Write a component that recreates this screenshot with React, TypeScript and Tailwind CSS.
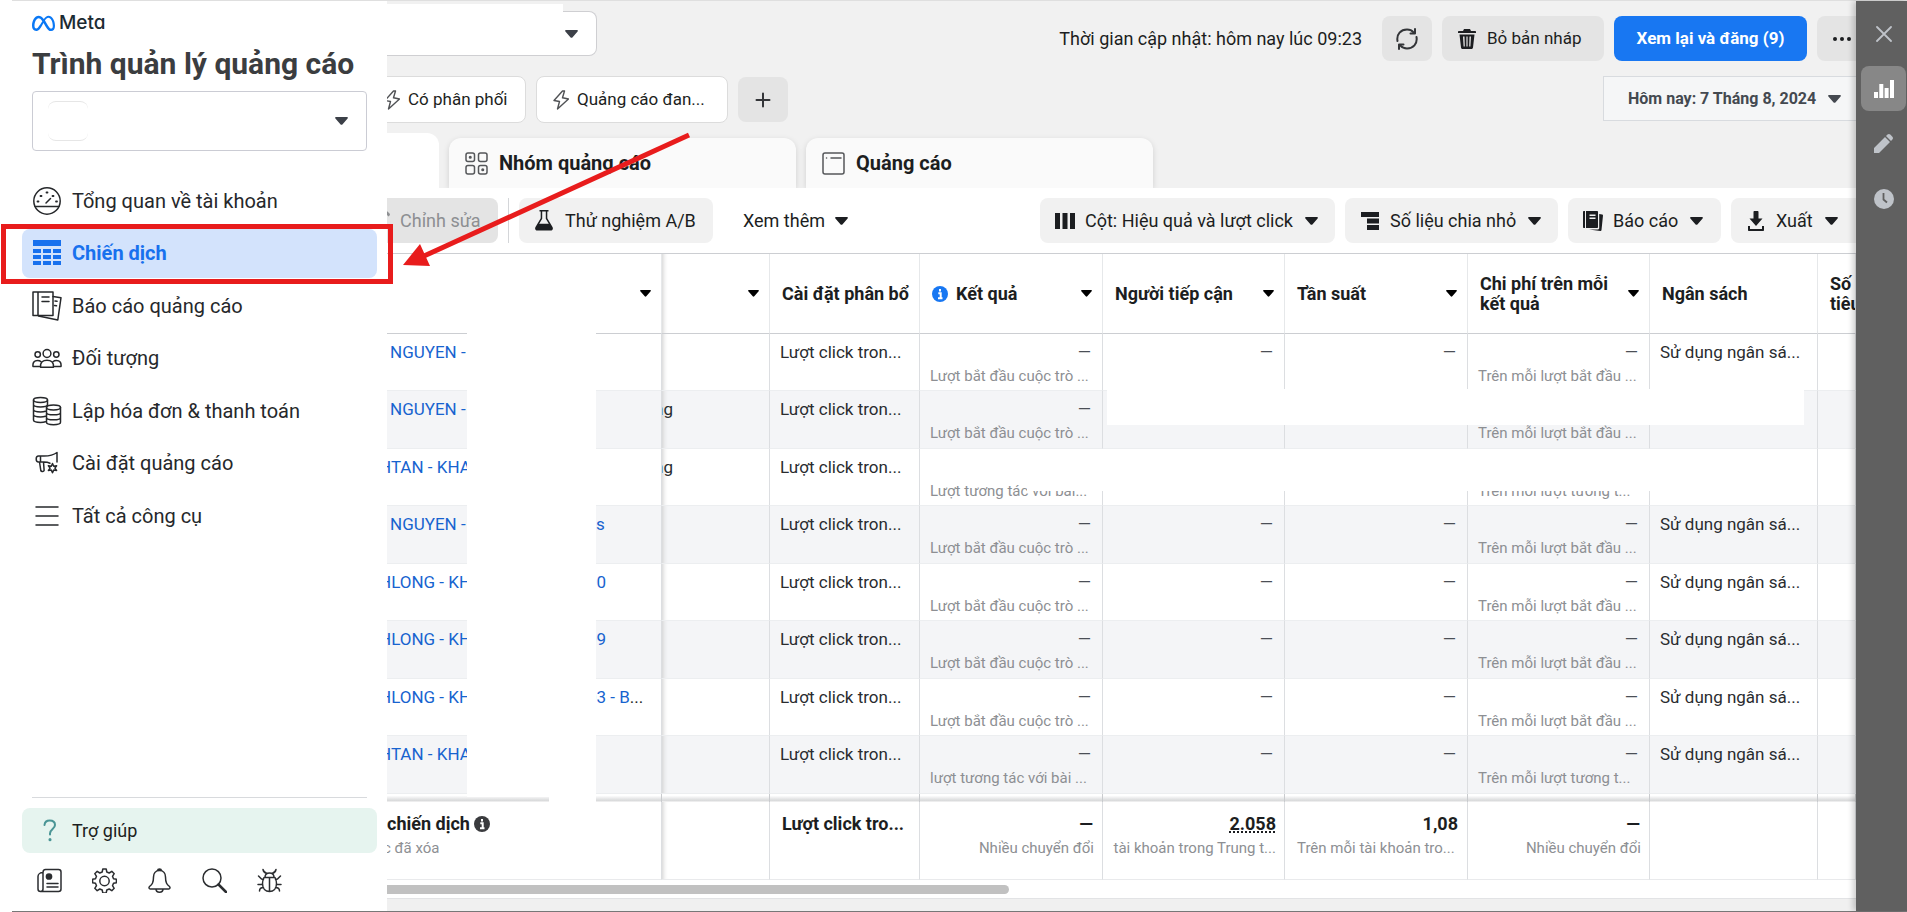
import type { ReactNode } from 'react'
import clsx from 'clsx'
import { FaMeta } from 'react-icons/fa6'

type IconProps = { className?: string }

function Caret({ className = 'w-[13px]' }: IconProps) {
  return (
    <svg viewBox="0 0 13 8" className={clsx('shrink-0', className)} fill="currentColor">
      <path d="M1 0h11c.9 0 1.2.8.6 1.500L7.400 7.400c-.5.6-1.300.6-1.800 0L.4 1.500C-.2.8.1 0 1 0z" />
    </svg>
  )
}

function Line({ children, className = 'size-7', box = 28 }: { children: ReactNode; className?: string; box?: number }) {
  return (
    <svg
      viewBox={`0 0 ${box} ${box}`}
      className={clsx('shrink-0', className)}
      fill="none"
      stroke="currentColor"
      strokeWidth="1.5"
      strokeLinecap="round"
      strokeLinejoin="round"
    >
      {children}
    </svg>
  )
}

const GaugeIcon = () => (
  <Line className="size-[30px]" box={30}>
    <circle cx="15" cy="15" r="13.2" />
    <path d="M3 20.500h24M14 17l4.500-4.500" />
    <path d="M5.500 15.500h1M8.500 10h1M14.500 6.500h1M20.500 10h1M24 15.500h1" strokeWidth="1.800" />
  </Line>
)

const GridIcon = () => (
  <svg viewBox="0 0 30 30" className="size-[30px] shrink-0" fill="currentColor">
    <path d="M1 2h28v6H1zM1 11h8v4H1zM11 11h8v4h-8zM21 11h8v4h-8zM1 17h8v4H1zM11 17h8v4h-8zM21 17h8v4h-8zM1 23h8v4H1zM11 23h8v4h-8zM21 23h8v4h-8z" />
  </svg>
)

const ReportIcon = () => (
  <Line className="size-[30px]" box={30}>
    <path d="M1 1h20v23.500H1zM6 1v23.500M10 6h7M10 10.500h7" />
    <path d="M21 5.500l8 1.200-3.200 22.300L6.500 25M23 10l2 .3M22.500 14.500l2 .3" />
  </Line>
)

const PeopleIcon = () => (
  <Line className="size-[30px]" box={30}>
    <circle cx="15" cy="10.500" r="3.900" />
    <circle cx="5.700" cy="11.500" r="2.700" />
    <circle cx="24.300" cy="11.500" r="2.700" />
    <path d="M8.500 24.200c-.4-5 2.500-7 6.500-7s6.900 2 6.500 7z" />
    <path d="M7.500 23.500H1c-.5-4 1.300-6 4.500-6 1.500 0 2.700.4 3.500 1.200M22.500 23.500H29c.5-4-1.300-6-4.500-6-1.500 0-2.700.4-3.500 1.200" />
  </Line>
)

const CoinsIcon = () => (
  <Line className="size-[30px]" box={30}>
    <ellipse cx="8.500" cy="4" rx="7" ry="2.400" />
    <path d="M1.500 4v20c0 1.400 3 2.400 7 2.400 2 0 3.500-.2 5-.7M15.500 4v6M1.500 8.500c0 1.400 3 2.400 7 2.400s7-1 7-2.400M1.500 13.500c0 1.400 3 2.400 7 2.400 2 0 3.500-.2 5-.7M1.500 18.500c0 1.400 3 2.400 7 2.400 2 0 3.500-.2 5-.7" />
    <ellipse cx="21.500" cy="11.500" rx="7" ry="2.400" />
    <path d="M14.500 11.500v14.800c0 1.400 3 2.400 7 2.400s7-1 7-2.400V11.500M14.500 16.400c0 1.400 3 2.400 7 2.400s7-1 7-2.400M14.500 21.400c0 1.400 3 2.400 7 2.400s7-1 7-2.400" />
  </Line>
)

const MegaphoneIcon = () => (
  <Line className="size-[30px]" box={30}>
    <path d="M25 14V4.500c-4 3-8 3.500-13 3.500H6.500C4.500 8 4.200 9.500 4.200 11s.5 3 2.300 3H12c2.500 0 4.500.5 6 1.200M8.500 8v6M7.500 14l1.300 8.500c.3 1.300 3.500 1.300 3.300-.5L11.500 14" />
    <path d="M20.500 15.500l1.200 2.700 2.900-.5-1.700 2.400 1.700 2.400-2.900-.4-1.200 2.700-1.200-2.700-2.900.4 1.700-2.400-1.700-2.400 2.900.5z" />
  </Line>
)

const MenuIcon = () => (
  <Line className="size-[30px]" box={30}>
    <path d="M4 6h22M4 15h22M4 24h22" />
  </Line>
)

const BoltIcon = () => (
  <Line className="h-5 w-4 text-[#505255]" box={16}>
    <path d="M9.500-1L1 8.500l5.500 1L4.500 17l11-10-6-1.200L11.500-1z" strokeWidth="1.400" />
  </Line>
)

const NAV = [
  { label: 'Tổng quan về tài khoản', icon: <GaugeIcon /> },
  { label: 'Chiến dịch', icon: <GridIcon />, active: true },
  { label: 'Báo cáo quảng cáo', icon: <ReportIcon /> },
  { label: 'Đối tượng', icon: <PeopleIcon /> },
  { label: 'Lập hóa đơn & thanh toán', icon: <CoinsIcon /> },
  { label: 'Cài đặt quảng cáo', icon: <MegaphoneIcon /> },
  { label: 'Tất cả công cụ', icon: <MenuIcon /> },
]

const FOOTER_ICONS = [
  {
    label: 'Tin tức',
    icon: (
      <Line className="size-[25px]" box={25}>
        <path d="M6 4.500C6 2.500 7 1.500 8.500 1.500h13c1.500 0 2.500 1 2.500 2.500v17c0 1.500-1 2.500-2.500 2.500h-18C2 23.500 1 22.500 1 21V8.500c0-2 2-4 5-4zM6 4.500V21c0 1.500-1 2.500-2.500 2.500M10 15.500h11M10 19h11" />
        <circle cx="12" cy="8.500" r="2.600" fill="currentColor" />
      </Line>
    ),
  },
  {
    label: 'Cài đặt',
    icon: (
      <Line className="size-[25px]" box={25}>
        <path d="M10.800 1h3.400l.6 3 2.400 1L19.800 3.300l2.400 2.400-1.700 2.600 1 2.400 2.900.6v3.400l-2.900.6-1 2.400 1.700 2.600-2.400 2.400-2.600-1.700-2.400 1-.6 2.900h-3.400l-.6-2.900-2.400-1-2.600 1.700-2.400-2.400 1.700-2.600-1-2.400-2.900-.6v-3.400l2.900-.6 1-2.400L2.800 5.700l2.400-2.400L7.800 5l2.400-1z" />
        <circle cx="12.500" cy="13" r="4.700" />
      </Line>
    ),
  },
  {
    label: 'Thông báo',
    icon: (
      <Line className="size-[25px]" box={25}>
        <path d="M12.500 2.500c4 0 6 3 6 6.500 0 6 1.500 7.500 4 9.500 1 1 .5 2.500-.8 2.500H3.300C2 21 1.500 19.500 2.500 18.500c2.500-2 4-3.500 4-9.500 0-3.500 2-6.500 6-6.500zM10.500 2.500c.3-2 3.700-2 4 0M9 21c0 4.300 7 4.300 7 0" />
      </Line>
    ),
  },
  {
    label: 'Tìm kiếm',
    icon: (
      <Line className="size-[25px]" box={25}>
        <circle cx="10" cy="10" r="9" />
        <path d="M16.500 16.500L24 24" strokeWidth="2.500" />
      </Line>
    ),
  },
  {
    label: 'Báo lỗi',
    icon: (
      <Line className="size-[25px]" box={25}>
        <path d="M7 9.500h11c1 2 1.500 4 1.500 6 0 5-3 8-7 8s-7-3-7-8c0-2 .5-4 1.500-6zM8 9.500c0-3 2-4.500 4.500-4.500S17 6.500 17 9.500M12.500 9.500v14M6 1.500c.5 2.500 2 3.500 4 4M19 1.500c-.5 2.500-2 3.500-4 4M1.500 8l3 3 2 .5M23.500 8l-3 3-2 .5M1 16.500h4.500M24 16.500h-4.500M2.500 23c0-2 1.500-3.500 4-3.500M22.500 23c0-2-1.500-3.500-4-3.500" />
      </Line>
    ),
  },
]

function Sidebar() {
  return (
    <aside className="flex w-[375px] shrink-0 flex-col bg-white px-[10px]">
      <div className="mt-3 flex h-5 items-center gap-1 px-[10px]">
        <FaMeta size={23} className="text-[#0a78f5]" />
        <span className="font-['Inter',sans-serif] text-[19px] font-medium text-[#1c2b33] [font-feature-settings:'cv11']">
          Meta
        </span>
      </div>
      <h1 className="mt-[13px] px-[10px] text-3xl leading-9 font-bold whitespace-nowrap text-[#3b3d40]">
        Trình quản lý quảng cáo
      </h1>
      <div className="relative mx-[10px] mt-[9px]">
        <select
          aria-label="Tài khoản quảng cáo"
          className="block h-[60px] w-full appearance-none rounded border border-[#cbccd4] bg-white px-4"
        />
        <span className="pointer-events-none absolute top-[10px] left-4 size-10 rounded-lg border-y border-[#e6e6e6]" />
        <Caret className="pointer-events-none absolute top-[26px] right-[19px] w-[13px] text-[#3c4048]" />
      </div>

      <nav className="mt-[25px] flex h-[364px] flex-col justify-between">
        {NAV.map(item => (
          <a
            key={item.label}
            href="#"
            className={clsx(
              'flex h-[49px] items-center gap-[10px] rounded-lg px-[10px] text-xl whitespace-nowrap',
              item.active ? 'bg-[#d3e3fc] font-bold text-[#1871ee]' : 'text-[#26282b]',
            )}
          >
            {item.icon}
            {item.label}
          </a>
        ))}
      </nav>

      <div className="mx-[10px] mt-auto border-t border-[#d8dadd]" />
      <a href="#" className="mt-[10px] flex h-[45px] items-center gap-[10px] rounded-lg bg-[#e6f4ef] px-[10px] text-lg text-[#1c1e21]">
        <Line className="size-[30px] text-[#4a9595]" box={30}>
          <path d="M12.500 9c.3-3.500 3-4.500 5.200-4.500 3 0 5.300 1.600 5.300 4.500 0 4-5 4-5 8.500v1" strokeWidth="2" />
          <path d="M18 23.500v.2" strokeWidth="3" />
        </Line>
        Trợ giúp
      </a>
      <div className="mt-[15px] mb-[18px] flex gap-[30px] px-[15px] text-[#2b2d30]">
        {FOOTER_ICONS.map(f => (
          <button key={f.label} aria-label={f.label}>
            {f.icon}
          </button>
        ))}
      </div>
    </aside>
  )
}

function Header() {
  return (
    <header className="bg-[#f1f1f1]">
      <div className="flex h-[75px] items-start justify-between">
        <div className="relative pt-[10px]">
          <select
            aria-label="Tài khoản"
            className="block h-[45px] w-[210px] appearance-none rounded-r-lg border border-l-0 border-[#cfcfd2] bg-white"
          />
          <span className="absolute top-[3px] left-0 h-8 w-44 bg-white" />
          <Caret className="pointer-events-none absolute top-[29px] right-[19px] w-[13px] text-[#3c4048]" />
        </div>
        <div className="-mr-[11px] flex items-center gap-[10px] pt-[15px] text-[17px] whitespace-nowrap text-[#1c1e21]">
          <span className="mr-[10px] text-lg">Thời gian cập nhật: hôm nay lúc 09:23</span>
          <button aria-label="Làm mới" className="flex h-[45px] w-[50px] items-center justify-center rounded-lg bg-[#e4e4e4]">
            <Line className="size-[22px] text-[#333538]" box={22}>
              <path d="M1.500 13C.3 6 5 1.500 11 1.500c2.500 0 5 1 6.500 2.800M20.500 9c1.200 7-3.500 11.500-9.500 11.500-2.500 0-5-1-6.500-2.800" strokeWidth="2" />
              <path d="M19 1v4.500h-4.500M3 21v-4.500h4.500" strokeWidth="2" />
            </Line>
          </button>
          <button className="flex h-[45px] w-[162px] items-center gap-[11px] rounded-lg bg-[#e4e4e4] pl-4">
            <svg viewBox="0 0 18 20" className="h-5 w-[18px]" fill="currentColor">
              <path d="M6 0h6l1 2h4c.6 0 1 .4 1 1v1H0V3c0-.6.400-1 1-1h4zM1.500 5.500h15L15 18.500c-.1.900-.7 1.500-1.500 1.500h-9c-.8 0-1.400-.6-1.500-1.500zM5 7.500l.6 10h1.200L6.500 7.500zM8.400 7.500v10h1.200v-10zM11.500 7.500l-.3 10h1.200l.6-10z" fillRule="evenodd" />
            </svg>
            Bỏ bản nháp
          </button>
          <button className="h-[45px] w-[193px] rounded-lg bg-[#1877f2] font-bold text-white">Xem lại và đăng (9)</button>
          <button aria-label="Thêm" className="flex h-[45px] w-[50px] items-center rounded-lg bg-[#e4e4e4] pl-4">
            <svg viewBox="0 0 18 4" className="w-[18px]" fill="currentColor">
              <circle cx="2" cy="2" r="2" />
              <circle cx="9" cy="2" r="2" />
              <circle cx="16" cy="2" r="2" />
            </svg>
          </button>
        </div>
      </div>

      <div className="flex h-[47px] items-start justify-between text-[#1c1e21]">
        <div className="flex items-center gap-[10px] text-[17px] whitespace-nowrap">
          <button className="-ml-5 flex h-[47px] w-[159px] items-center gap-2 rounded-lg border border-[#dcdcdc] bg-white pl-4">
            <BoltIcon />
            Có phân phối
          </button>
          <button className="flex h-[47px] w-[192px] items-center gap-2 rounded-lg border border-[#dcdcdc] bg-white pl-4">
            <BoltIcon />
            Quảng cáo đan...
          </button>
          <button aria-label="Thêm bộ lọc" className="flex h-[45px] w-[50px] items-center justify-center rounded-lg bg-[#e4e4e4]">
            <Line className="size-4 text-[#333538]" box={16}>
              <path d="M8 1.500v13M1.500 8h13" strokeWidth="2" />
            </Line>
          </button>
        </div>
        <button className="flex h-[45px] w-[253px] items-center gap-3 border border-r-0 border-[#d8dbdf] bg-[#f5f6f7] pl-6 text-base font-bold whitespace-nowrap text-[#444950]">
          Hôm nay: 7 Tháng 8, 2024
          <Caret />
        </button>
      </div>

      <div role="tablist" className="flex h-[65px] items-end gap-[10px] overflow-hidden text-xl font-bold text-[#1c1e21]">
        <button role="tab" aria-label="Chiến dịch" aria-selected="true" className="h-[55px] w-[52px] rounded-tr-xl bg-white" />
        <button role="tab" aria-selected="false" className="flex h-[50px] w-[347px] items-center gap-[11px] rounded-t-xl bg-[#fafafa] pl-4 shadow-[0_2px_6px_#0002]">
          <Line className="size-[23px] text-[#55575a]" box={23}>
            <rect x="1" y="1" width="8.500" height="8.500" rx="2" />
            <rect x="13.500" y="1" width="8.500" height="8.500" rx="2" />
            <rect x="1" y="13.500" width="8.500" height="8.500" rx="2" />
            <rect x="13.500" y="13.500" width="8.500" height="8.500" rx="2" />
            <path d="M5.200 5.200h.1M17.700 17.700h.1" strokeWidth="3" />
          </Line>
          Nhóm quảng cáo
        </button>
        <button role="tab" aria-selected="false" className="flex h-[50px] w-[347px] items-center gap-[11px] rounded-t-xl bg-[#fafafa] pl-4 shadow-[0_2px_6px_#0002]">
          <Line className="size-[23px] text-[#55575a]" box={23}>
            <rect x="1" y="1" width="21" height="21" rx="2" />
            <path d="M4.500 6h.1M9 6h10" />
          </Line>
          Quảng cáo
        </button>
      </div>
    </header>
  )
}

function ToolButton({ icon, label, className }: { icon: ReactNode; label: string; className: string }) {
  return (
    <button aria-haspopup="menu" className={clsx('flex h-[45px] shrink-0 items-center rounded-lg bg-[#f1f1f1] pl-[15px]', className)}>
      {icon}
      <span className="ml-[10px]">{label}</span>
      <Caret className="ml-3 w-[13px]" />
    </button>
  )
}

function Toolbar() {
  return (
    <div className="flex h-[66px] items-center justify-between border-b border-[#ccced2] text-lg whitespace-nowrap text-[#1c1e21]">
      <div className="flex items-center gap-[10px]">
        <button disabled className="-ml-5 flex h-[45px] w-[131px] items-center gap-[10px] rounded-lg bg-[#e4e4e4] pl-1 text-[#8d8f92]">
          <svg viewBox="0 0 19 19" className="size-[19px]" fill="currentColor">
            <path d="M0 19l1-5L12 3l4 4L5 18zM13.500 1.500l1-1c.6-.6 1.400-.6 2 0l2 2c.6.6.6 1.400 0 2l-1 1z" />
          </svg>
          Chỉnh sửa
        </button>
        <span className="h-[45px] border-l border-[#d4d6d9]" />
        <button className="flex h-[45px] w-[194px] items-center gap-3 rounded-lg bg-[#f1f1f1] pl-4">
          <svg viewBox="0 0 18 21" className="h-[21px] w-[18px]" fill="currentColor">
            <path d="M4.500 0h9v1.500h-1.200v6.800l5.200 8.800c1 1.700 0 3.400-1.900 3.400H2.400C.5 20.500-.5 18.800.5 17.100l5.200-8.800V1.500H4.500zM7.200 1.500v7.200l-3 5h9.600l-3-5V1.500z" fillRule="evenodd" />
          </svg>
          Thử nghiệm A/B
        </button>
        <button aria-haspopup="menu" className="flex h-[45px] items-center gap-[10px] px-5">
          Xem thêm
          <Caret />
        </button>
      </div>

      <div className="-mr-[10px] flex items-center gap-[10px]">
        <ToolButton
          label="Cột: Hiệu quả và lượt click"
          className="w-[295px]"
          icon={
            <svg viewBox="0 0 20 16" className="w-5" fill="currentColor">
              <path d="M0 0h5v16H0zM7.500 0h5v16h-5zM15 0h5v16h-5z" />
            </svg>
          }
        />
        <ToolButton
          label="Số liệu chia nhỏ"
          className="w-[213px]"
          icon={
            <svg viewBox="0 0 20 18" className="w-5" fill="currentColor">
              <path d="M1 0h18v5H1zM7 6.500h12v5H7zM7 13h12v5H7z" />
            </svg>
          }
        />
        <ToolButton
          label="Báo cáo"
          className="w-[153px]"
          icon={
            <svg viewBox="0 0 20 20" className="w-5" fill="currentColor">
              <path d="M0 1c0-.6.400-1 1-1h1v17H1c-.6 0-1-.4-1-1zM3 0h11c.6 0 1 .4 1 1v15c0 .6-.4 1-1 1H3zM6.500 3.500V5h6V3.500zM6.500 6.500V8h6V6.500zM16.200 3l3 .4c.5.100.8.500.8 1L18.500 19c-.1.600-.5 1-1.100.9L6 18.500h9c.8 0 1.200-.5 1.200-1.200z" fillRule="evenodd" />
            </svg>
          }
        />
        <ToolButton
          label="Xuất"
          className="w-[135px]"
          icon={
            <svg viewBox="0 0 20 20" className="w-5" fill="currentColor">
              <path d="M7.500 1c0-.6.400-1 1-1h3c.6 0 1 .4 1 1v6.500h4L10 15 3.500 7.500h4zM2 15h2v3h12v-3h2v4c0 .6-.4 1-1 1H3c-.6 0-1-.4-1-1z" />
            </svg>
          }
        />
      </div>
    </div>
  )
}

function InfoDot({ className }: IconProps) {
  return (
    <svg viewBox="0 0 16 16" className={clsx('shrink-0', className)}>
      <circle cx="8" cy="8" r="8" fill="currentColor" />
      <path d="M8 3v2.400M6.300 7.200H8.700V12M6 12.200h4.500" stroke="#fff" strokeWidth="2" fill="none" />
    </svg>
  )
}

type Column = { key: string; width: string; lines: string[]; caret?: boolean; info?: boolean }

const COLUMNS: Column[] = [
  { key: 'name', width: 'w-[275px]', lines: [], caret: true },
  { key: 'delivery', width: 'w-[108px]', lines: [], caret: true },
  { key: 'attribution', width: 'w-[150px]', lines: ['Cài đặt phân bổ'] },
  { key: 'results', width: 'w-[183px]', lines: ['Kết quả'], caret: true, info: true },
  { key: 'reach', width: 'w-[182px]', lines: ['Người tiếp cận'], caret: true },
  { key: 'frequency', width: 'w-[183px]', lines: ['Tần suất'], caret: true },
  { key: 'cost', width: 'w-[182px]', lines: ['Chi phí trên mỗi', 'kết quả'], caret: true },
  { key: 'budget', width: 'w-[168px]', lines: ['Ngân sách'] },
  { key: 'spent', width: '', lines: ['Số tiền', 'tiêu'] },
]

type Row = { name: string; cut?: boolean; tail?: string; dots?: boolean; status?: string; result: string; cost: string }

const STARTED = 'Lượt bắt đầu cuộc trò ...'
const COST_STARTED = 'Trên mỗi lượt bắt đầu ...'
const COST_ENGAGED = 'Trên mỗi lượt tương t...'

const ROWS: Row[] = [
  { name: 'NGUYEN -', result: STARTED, cost: COST_STARTED },
  { name: 'NGUYEN -', status: 'ng', result: STARTED, cost: COST_STARTED },
  { name: 'HTAN - KHA', cut: true, status: 'ng', result: 'Lượt tương tác với bài...', cost: COST_ENGAGED },
  { name: 'NGUYEN -', tail: 'es', result: STARTED, cost: COST_STARTED },
  { name: 'HLONG - KH', cut: true, tail: '00', result: STARTED, cost: COST_STARTED },
  { name: 'HLONG - KH', cut: true, tail: '09', result: STARTED, cost: COST_STARTED },
  { name: 'HLONG - KH', cut: true, tail: '03 - B', dots: true, result: STARTED, cost: COST_STARTED },
  { name: 'HTAN - KHA', cut: true, result: 'lượt tương tác với bài ...', cost: COST_ENGAGED },
]

const CELL = 'overflow-hidden border-r border-b border-r-[#dcdee1] border-b-[#eceef0] px-[10px] pt-[6px] align-top'
const FOOT = 'overflow-hidden border-r border-b border-r-[#dcdee1] border-b-[#e9eaec] px-2 pt-[10px] align-top'
const PANE_SHADOW = 'shadow-[inset_6px_0_5px_-5px_#ccc]'

function Metric({ note, foot, value = '—' }: { note?: string; foot?: boolean; value?: string }) {
  return (
    <>
      <div className={clsx('pr-px text-right leading-6', foot ? 'text-lg leading-6 font-bold text-[#1c1e21]' : 'text-[17px] text-[#4b4f56]')}>
        {value}
      </div>
      {note && <div className="text-[15px] leading-6 text-[#8d8f93]">{note}</div>}
    </>
  )
}

function CampaignTable() {
  return (
    <div className="relative overflow-hidden bg-white">
      <table className="w-full table-fixed border-separate border-spacing-0 text-[17px] leading-6 whitespace-nowrap text-[#2a2c2f]">
        <thead>
          <tr className="h-20">
            {COLUMNS.map(c => (
              <th
                key={c.key}
                aria-label={c.lines.length ? undefined : c.key === 'name' ? 'Tên' : 'Phân phối'}
                className={clsx(
                  'overflow-hidden border-r border-b border-r-[#e6e8ea] border-b-[#ccced2] pr-[10px] pl-3 text-left text-lg leading-5 font-bold text-[#1c1e21]',
                  c.width,
                  c.key === 'delivery' && PANE_SHADOW,
                )}
              >
                <div className="flex items-center">
                  {c.info && <InfoDot className="mr-2 w-4 text-[#1877f2]" />}
                  <span>
                    {c.lines.map(l => (
                      <span key={l} className="block">
                        {l}
                      </span>
                    ))}
                  </span>
                  {c.caret && <Caret className="ml-auto w-[11px] text-black" />}
                </div>
              </th>
            ))}
          </tr>
        </thead>
        <tbody>
          {ROWS.map((r, i) => (
            <tr key={i} className="h-[57px] even:h-[58px] even:bg-[#f4f5f7]">
              <td className={clsx(CELL, 'pl-0')}>
                <a href="#" className="flex text-[#1763cf]">
                  <span className={clsx('w-[200px] shrink-0', r.cut ? '-indent-2' : 'indent-[3px]')}>{r.name}</span>
                  {r.tail}
                  {r.dots && <span className="text-[#1c1e21]">...</span>}
                </a>
              </td>
              <td className={clsx(CELL, PANE_SHADOW, 'pl-0')}>
                <div className="-indent-2">{r.status}</div>
              </td>
              <td className={CELL}>Lượt click tron...</td>
              <td className={CELL}>
                <Metric note={r.result} />
              </td>
              <td className={CELL}>
                <Metric />
              </td>
              <td className={CELL}>
                <Metric />
              </td>
              <td className={CELL}>
                <Metric note={r.cost} />
              </td>
              <td className={CELL}>{i !== 1 && i !== 2 && 'Sử dụng ngân sá...'}</td>
              <td className={CELL} />
            </tr>
          ))}
        </tbody>
        <tfoot>
          <tr className="h-2" aria-hidden="true">
            {COLUMNS.map(c => (
              <td key={c.key} className="border-r border-[#c9cbce] bg-linear-to-b from-white from-20% via-[#d9dadb] via-80% to-[#f6f6f6] p-0" />
            ))}
          </tr>
          <tr className="h-[78px]">
            <td className={clsx(FOOT, 'pl-0')}>
              <div className="flex items-center gap-1 text-lg leading-6 font-bold text-[#1c1e21]">
                chiến dịch
                <InfoDot className="w-4 text-[#3a3b3e]" />
              </div>
              <div className="-indent-1 text-[15px] text-[#8d8f93]">c đã xóa</div>
            </td>
            <td className={clsx(FOOT, PANE_SHADOW)} />
            <td className={clsx(FOOT, 'pl-3 text-lg leading-6 font-bold text-[#1c1e21]')}>Lượt click tro...</td>
            <td className={clsx(FOOT, 'text-right')}>
              <Metric foot note="Nhiều chuyển đổi" />
            </td>
            <td className={clsx(FOOT, 'text-right')}>
              <div className="text-lg leading-6 font-bold text-[#1c1e21] underline decoration-dotted underline-offset-2">2.058</div>
              <div className="text-[15px] text-[#8d8f93]">tài khoản trong Trung t...</div>
            </td>
            <td className={clsx(FOOT, 'pl-3')}>
              <Metric foot value="1,08" note="Trên mỗi tài khoản tro..." />
            </td>
            <td className={clsx(FOOT, 'text-right')}>
              <Metric foot note="Nhiều chuyển đổi" />
            </td>
            <td className={FOOT} />
            <td className={FOOT} />
          </tr>
        </tfoot>
      </table>

      {/* blanked-out areas */}
      <div className="absolute top-[76px] left-20 h-[467px] w-[129px] bg-white" />
      <div className="absolute top-[540px] left-[162px] h-[10px] w-[47px] bg-white" />
      <div className="absolute top-[135px] left-[720px] h-9 w-[697px] bg-white" />
      <div className="absolute top-[195px] left-[640px] h-[42px] w-[790px] bg-white" />
    </div>
  )
}

function Rail() {
  return (
    <aside className="z-10 flex w-[51px] shrink-0 flex-col items-center gap-[10px] bg-[#606060] pt-[10px] pl-1 text-[#bfc3c9] shadow-[-3px_0_6px_#0003]">
      <button aria-label="Đóng" className="flex size-[45px] items-center justify-center">
        <Line className="size-4" box={16}>
          <path d="M1 1l14 14M15 1L1 15" strokeWidth="1.800" />
        </Line>
      </button>
      <button aria-label="Biểu đồ" className="flex size-[45px] items-center justify-center rounded-lg bg-[#878787] text-white">
        <svg viewBox="0 0 20 18" className="w-5" fill="currentColor">
          <path d="M0 12h4v6H0zM5.300 4h4v14h-4zM10.600 8h4v10h-4zM16 0h4v18h-4z" />
        </svg>
      </button>
      <button aria-label="Chỉnh sửa" className="flex size-[45px] items-center justify-center">
        <svg viewBox="0 0 19 19" className="w-[19px]" fill="currentColor">
          <path d="M0 19v-5L11 3l5 5L5 19zM12 2l1.500-1.400c.8-.8 2-.8 2.800 0l2.100 2.100c.8.8.8 2 0 2.800L17 7z" />
        </svg>
      </button>
      <button aria-label="Lịch sử" className="flex size-[45px] items-center justify-center">
        <svg viewBox="0 0 20 20" className="w-5">
          <circle cx="10" cy="10" r="10" fill="currentColor" />
          <path d="M9.500 4v6.500l3.500 3" stroke="#606060" strokeWidth="1.800" fill="none" />
        </svg>
      </button>
    </aside>
  )
}

export default function App() {
  return (
    <div className="relative min-h-screen bg-white pl-3 font-['Roboto',sans-serif]">
      <div className="flex min-h-screen border-t border-b border-t-[#dfdfdf] border-b-[#777]">
        <Sidebar />
        <main className="flex min-w-0 flex-1 flex-col overflow-hidden bg-white">
          <Header />
          <Toolbar />
          <CampaignTable />
          <div className="h-[19px] border-b border-[#e2e3e5] pt-[5px]">
            <div className="h-[9px] w-[622px] rounded-r-full bg-[#c1c1c1]" />
          </div>
          <div className="flex-1 bg-[#f0f0f0]" />
        </main>
        <Rail />
      </div>

      {/* callout around the campaigns link */}
      <div className="pointer-events-none absolute top-56 left-px z-20 h-[60px] w-[392px] border-[5px] border-[#e81c1c]" />
      <svg viewBox="0 0 290 136" className="pointer-events-none absolute top-[132px] left-[402px] z-20 h-[136px] w-[290px]">
        <path d="M287 3L22 124" stroke="#e81c1c" strokeWidth="5" />
        <path d="M1 133L18 112l10 22z" fill="#e81c1c" />
      </svg>
    </div>
  )
}
